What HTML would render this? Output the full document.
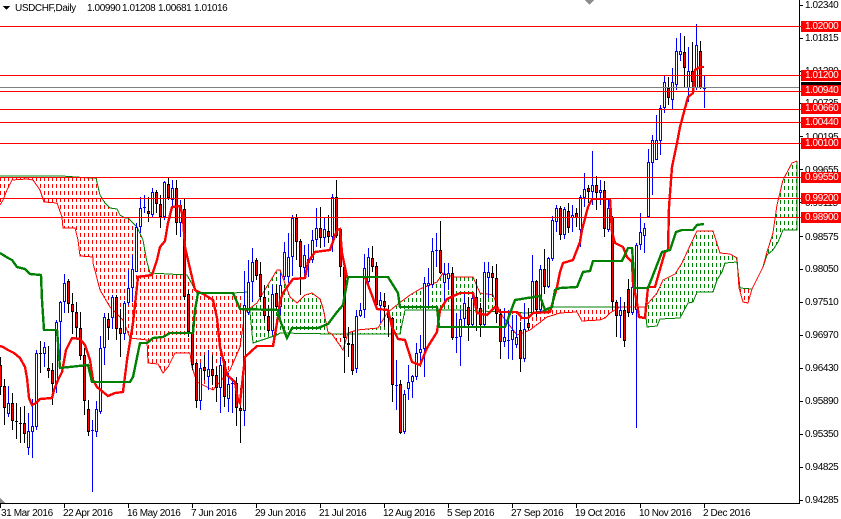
<!DOCTYPE html>
<html><head><meta charset="utf-8"><style>
html,body{margin:0;padding:0;background:#fff}
#w{position:relative;width:841px;height:519px;overflow:hidden;background:#fff;font-family:"Liberation Sans",sans-serif;font-size:10px;letter-spacing:-.4px;color:#000;line-height:12px}
#w span{position:absolute;white-space:nowrap}
#w svg{position:absolute;left:0;top:0;shape-rendering:crispEdges}
.p{left:805px}
.l{left:801px;width:40px;height:11px;line-height:11px;background:#f00;color:#fff;padding-left:4px;box-sizing:border-box}
.d{top:508px}
.t{top:3px}
</style></head><body><div id="w">
<svg id="c" width="841" height="519" viewBox="0 0 841 519"></svg>
<span class="p" style="top:0px">1.02340</span>
<span class="p" style="top:33px">1.01815</span>
<span class="p" style="top:66px">1.01280</span>
<span class="p" style="top:98px">1.00735</span>
<span class="p" style="top:132px">1.00195</span>
<span class="p" style="top:165px">0.99655</span>
<span class="p" style="top:198px">0.99115</span>
<span class="p" style="top:232px">0.98575</span>
<span class="p" style="top:264px">0.98050</span>
<span class="p" style="top:297px">0.97510</span>
<span class="p" style="top:330px">0.96970</span>
<span class="p" style="top:363px">0.96430</span>
<span class="p" style="top:396px">0.95890</span>
<span class="p" style="top:429px">0.95350</span>
<span class="p" style="top:462px">0.94825</span>
<span class="p" style="top:495px">0.94285</span>
<span class="l" style="top:82px;background:#000;height:8px"></span>
<span class="l" style="top:21px">1.02000</span>
<span class="l" style="top:70px">1.01200</span>
<span class="l" style="top:85px">1.00940</span>
<span class="l" style="top:103px">1.00660</span>
<span class="l" style="top:117px">1.00440</span>
<span class="l" style="top:138px">1.00100</span>
<span class="l" style="top:172px">0.99550</span>
<span class="l" style="top:193px">0.99200</span>
<span class="l" style="top:212px">0.98900</span>
<span class="d" style="left:1px">31 Mar 2016</span>
<span class="d" style="left:63px">22 Apr 2016</span>
<span class="d" style="left:127px">16 May 2016</span>
<span class="d" style="left:191px">7 Jun 2016</span>
<span class="d" style="left:255px">29 Jun 2016</span>
<span class="d" style="left:319px">21 Jul 2016</span>
<span class="d" style="left:383px">12 Aug 2016</span>
<span class="d" style="left:447px">5 Sep 2016</span>
<span class="d" style="left:511px">27 Sep 2016</span>
<span class="d" style="left:575px">19 Oct 2016</span>
<span class="d" style="left:639px">10 Nov 2016</span>
<span class="d" style="left:703px">2 Dec 2016</span>
<span class="t" style="left:15px">USDCHF,Daily</span>
<span class="t" style="left:87px">1.00990</span>
<span class="t" style="left:122px">1.01208</span>
<span class="t" style="left:158px">1.00681</span>
<span class="t" style="left:194px">1.01016</span>
</div>
<script>
(function(){
var C=[
"r,357,395,365,387","r,379,425,386,408","b,386,417,403,414","r,393,430,403,421","k,403,439,421,422","k,407,443,423,424","r,406,443,423,434","b,413,455,431,448","b,399,458,426,432","b,350,430,353,427",
"k,341,373,353,354","b,342,367,347,354","r,346,378,368,371","r,363,405,370,384","b,320,393,322,384","b,301,360,302,322","b,274,313,283,302","r,279,313,281,304","r,293,334,304,312","r,302,338,312,328",
"r,312,360,328,356","r,348,415,355,401","r,400,436,409,432","b,420,492,430,430","b,401,437,409,432","b,336,414,348,412","b,313,365,317,348","r,313,340,319,328","b,295,329,297,318","r,295,340,297,329",
"r,309,357,328,334","b,301,340,303,334","b,270,305,288,303","b,255,302,269,288","b,223,272,227,272","b,197,233,208,227","b,195,213,207,208","r,197,222,211,214","b,188,217,192,215","r,190,213,192,204",
"r,195,228,204,217","b,181,220,182,217","r,178,200,184,198","b,180,207,188,200","r,180,235,188,223","b,200,237,205,223","r,198,300,209,297","r,290,337,294,332","r,325,370,332,365","r,362,408,363,401",
"b,363,410,368,401","r,355,380,367,371","b,350,390,369,377","r,355,385,369,376","r,367,402,375,388","b,357,413,365,388","r,360,407,361,397","b,373,412,384,399","b,378,413,383,383","r,377,426,383,408",
"r,388,443,408,411","b,271,426,305,411","b,260,315,282,313","b,248,302,262,282","r,258,280,260,276","r,262,300,274,297","r,285,320,297,316","r,305,333,316,331","b,285,335,294,331","r,285,310,293,307",
"b,273,315,285,307","b,242,280,252,277","b,233,283,257,277","b,215,276,218,257","r,214,260,218,242","r,239,295,241,267","b,245,278,255,268","b,244,277,259,263","b,230,263,240,260","b,208,247,228,240",
"r,207,248,228,238","b,217,247,229,238","r,215,243,231,237","b,194,252,197,237","r,180,238,197,236","r,228,277,229,267","r,267,373,267,338","r,327,357,343,345","r,332,375,344,371","b,310,373,316,369",
"b,303,317,310,316","b,254,318,268,310","b,248,285,257,282","r,246,272,258,267","r,262,307,266,305","b,292,323,300,306","r,293,327,301,307","r,305,337,313,318","r,317,402,318,385","b,360,410,385,385",
"r,380,434,384,433","b,390,434,394,432","b,365,400,382,389","b,375,398,376,382","b,343,380,353,377","b,335,367,349,353","b,277,377,283,349","b,268,307,283,286","b,238,288,251,285","b,233,267,250,251",
"r,221,274,250,273","b,263,303,274,283","b,263,290,273,279","r,267,340,273,338","b,313,353,337,337","b,310,366,319,337","b,293,327,303,319","r,297,341,307,325","b,292,328,298,325","r,279,331,297,309",
"r,303,337,308,325","b,262,327,272,325","b,262,298,272,278","r,266,297,273,278","r,264,323,278,314","r,309,359,314,342","b,308,347,337,342","b,310,359,340,340","b,315,360,330,340","b,315,348,337,345",
"r,322,372,330,359","b,303,362,329,359","r,308,330,323,328","b,255,314,281,313","r,280,317,281,310","b,265,312,269,310","r,249,294,269,287","b,257,288,258,287","b,216,261,220,259","b,205,232,208,222",
"r,206,240,208,235","b,207,239,209,235","r,203,233,211,228","b,205,232,215,218","r,208,227,213,218","b,195,247,197,230","b,173,207,189,198","r,185,203,188,192","b,151,205,185,192","r,176,210,185,193",
"b,180,205,190,193","r,181,237,190,229","b,198,232,208,230","r,216,310,217,302","r,300,337,302,316","b,297,338,310,316","r,302,347,310,341","r,279,317,289,313","b,278,315,287,313","b,243,428,245,310",
"b,213,250,232,245","b,223,253,228,236","b,149,218,162,217","b,135,195,140,163","b,115,160,140,160","b,105,155,108,141","b,76,113,82,108","r,77,105,88,98","b,68,109,82,100","b,38,90,51,85",
"b,33,61,51,55","r,36,87,52,68","b,47,102,71,88","r,42,87,71,82","b,24,90,45,88","r,41,89,51,88","b,76,108,88,88"
];
var T="0,346 3,347 8,350 14,353 20,358 25,367 27,378 29,398 32,405 36,403 40,399 52,398 54,390 58,380 62,372 66,350 72,338 80,339 85,345 90,360 93,380 97,387 103,392 108,396 115,393 123,392 127,360 133,323 138,277 152,275 157,260 160,247 165,241 168,223 172,207 180,206 183,217 185,247 188,260 195,290 205,295 213,300 217,318 220,347 227,375 235,382 238,400 240,403 245,357 257,346 273,346 278,317 280,301 283,293 290,283 293,279 305,278 308,262 315,252 330,250 337,230 340,229 342,253 347,277 365,277 370,290 377,309 388,310 392,327 398,339 405,340 412,362 420,365 427,348 437,332 440,310 447,299 460,293 473,293 477,313 487,315 495,307 500,312 517,312 522,318 528,318 533,313 550,312 557,287 560,272 563,263 573,260 580,242 582,230 588,207 592,199 610,199 612,232 615,243 623,247 627,257 632,262 633,283 637,303 639,317 645,318 648,287 655,287 665,252 668,250 669,207 672,167 677,143 680,127 688,97 693,93 695,70 700,67 704,67";
var K="0,253 8,258 12,260 17,267 25,269 30,274 41,275 42,300 44,330 57,330 60,368 88,365 92,382 130,382 133,377 140,343 147,343 153,338 163,337 170,333 193,333 195,310 198,293 233,293 240,309 278,310 280,320 287,338 292,328 318,328 328,324 337,312 343,305 348,277 388,277 398,293 400,307 437,307 439,327 505,327 515,300 540,296 545,310 552,307 555,290 560,288 577,287 583,272 590,271 593,261 622,261 628,248 632,248 635,288 648,288 662,252 670,250 676,232 682,230 693,230 697,225 704,224";
var B="0,176 62,176 90,178 96,178 100,195 105,203 110,208 117,209 120,215 125,218 128,218 137,227 143,240 146,257 147,262 150,273 187,275 197,293 233,293 248,292 253,343 277,335 280,333 333,334 400,334 405,310 457,310 528,313 548,310 550,307 645,307 647,327 657,326 660,319 680,318 688,303 693,302 697,292 713,292 717,280 722,272 725,263 737,262 740,288 752,289 763,267 767,255 773,250 778,242 783,230 797,230 797,161";
var A="0,205 3,200 7,190 12,180 27,179 33,180 40,190 44,202 57,203 62,217 63,228 75,228 78,240 80,256 93,257 93,263 100,290 110,307 123,320 130,338 147,340 148,363 158,364 163,373 168,367 175,353 190,353 192,367 197,382 213,390 230,370 240,347 245,312 257,303 263,293 277,270 280,270 290,297 297,303 305,295 312,293 320,299 323,308 328,332 332,334 343,350 348,333 357,330 378,328 387,313 398,304 410,295 420,289 437,282 443,273 453,277 473,277 480,293 493,295 497,305 503,317 517,335 530,330 547,317 560,313 577,312 582,321 600,320 605,318 610,313 620,307 645,307 657,293 663,280 675,274 682,263 688,250 697,231 713,231 720,253 730,254 737,258 739,288 743,302 748,303 752,289 763,267 767,252 773,233 777,205 783,180 792,163 797,161";
function pts(s){return s.split(" ").map(function(p){return p.split(",").map(Number)})}
function at(P,x){for(var i=1;i<P.length;i++){if(x<=P[i][0]){var a=P[i-1],b=P[i];if(b[0]==a[0])return b[1];return a[1]+(b[1]-a[1])*(x-a[0])/(b[0]-a[0])}}return P[P.length-1][1]}
var o="",PA=pts(A),PB=pts(B);
function R(x,y,w,h,c){return '<rect x="'+x+'" y="'+y+'" width="'+w+'" height="'+h+'" fill="'+c+'"/>'}
for(var x=0;x<=796;x+=4){var a=Math.round(at(PA,x)),b=Math.round(at(PB,x));if(Math.abs(a-b)<2)continue;var y0=Math.min(a,b),y1=Math.max(a,b),red=a>b,col=red?"#f00":"#008000",ph=red?2:4,off=((y0-ph)%7+7)%7;
 o+='<line x1="'+(x+.5)+'" y1="'+y0+'" x2="'+(x+.5)+'" y2="'+y1+'" stroke="'+col+'" stroke-width="1" stroke-dasharray="4 3" stroke-dashoffset="'+off+'"/>'}
o+='<polyline points="'+B+'" fill="none" stroke="#008000" stroke-width="1"/>';
o+='<polyline points="'+A+'" fill="none" stroke="#f00" stroke-width="1"/>';
C.forEach(function(s,i){var d=s.split(","),c=d[0]=="b"?"#00f":"#000",f=d[0]=="b"?"#fff":"#f00",h=+d[1],l=+d[2],t=+d[3],e=+d[4],x=4*i;
 o+=R(x,h,1,l-h,c);
 if(e-t<2){o+=R(x-1,t,3,1,c)}else{o+=R(x-1,t,3,e-t,c);o+=R(x,t+1,1,e-t-2,f)}});
o+='<polyline points="'+T+'" fill="none" stroke="#f00" stroke-width="2.4"/>';
o+='<polyline points="'+K+'" fill="none" stroke="#008000" stroke-width="2.4"/>';
o+=R(0,87,799,1,"#808080");
[26,75,91,109,122,143,177,198,217].forEach(function(y){o+=R(0,y,799,1,"#f00")});
o+=R(799,0,1,503,"#000");o+=R(0,503,800,1,"#000");
[5,38,71,103,136,169,202,236,269,302,335,368,401,434,467,500].forEach(function(y){o+=R(800,y,3,1,"#000")});
[0,64,128,192,256,320,384,448,512,576,640,704].forEach(function(x){o+=R(x,504,1,4,"#000")});
[26,75,91,109,122,143,177,198,217].forEach(function(y){o+=R(800,y,1,1,"#f00")});
o+='<polygon points="3,6 10,6 6.5,10" fill="#000"/>';
o+='<polygon points="585,0 594,0 589.5,5" fill="#8c8c8c"/>';
o+='<polygon points="0,498 5,503 0,503" fill="#8c8c8c"/>';
document.getElementById("c").innerHTML=o;
})();
</script></body></html>
